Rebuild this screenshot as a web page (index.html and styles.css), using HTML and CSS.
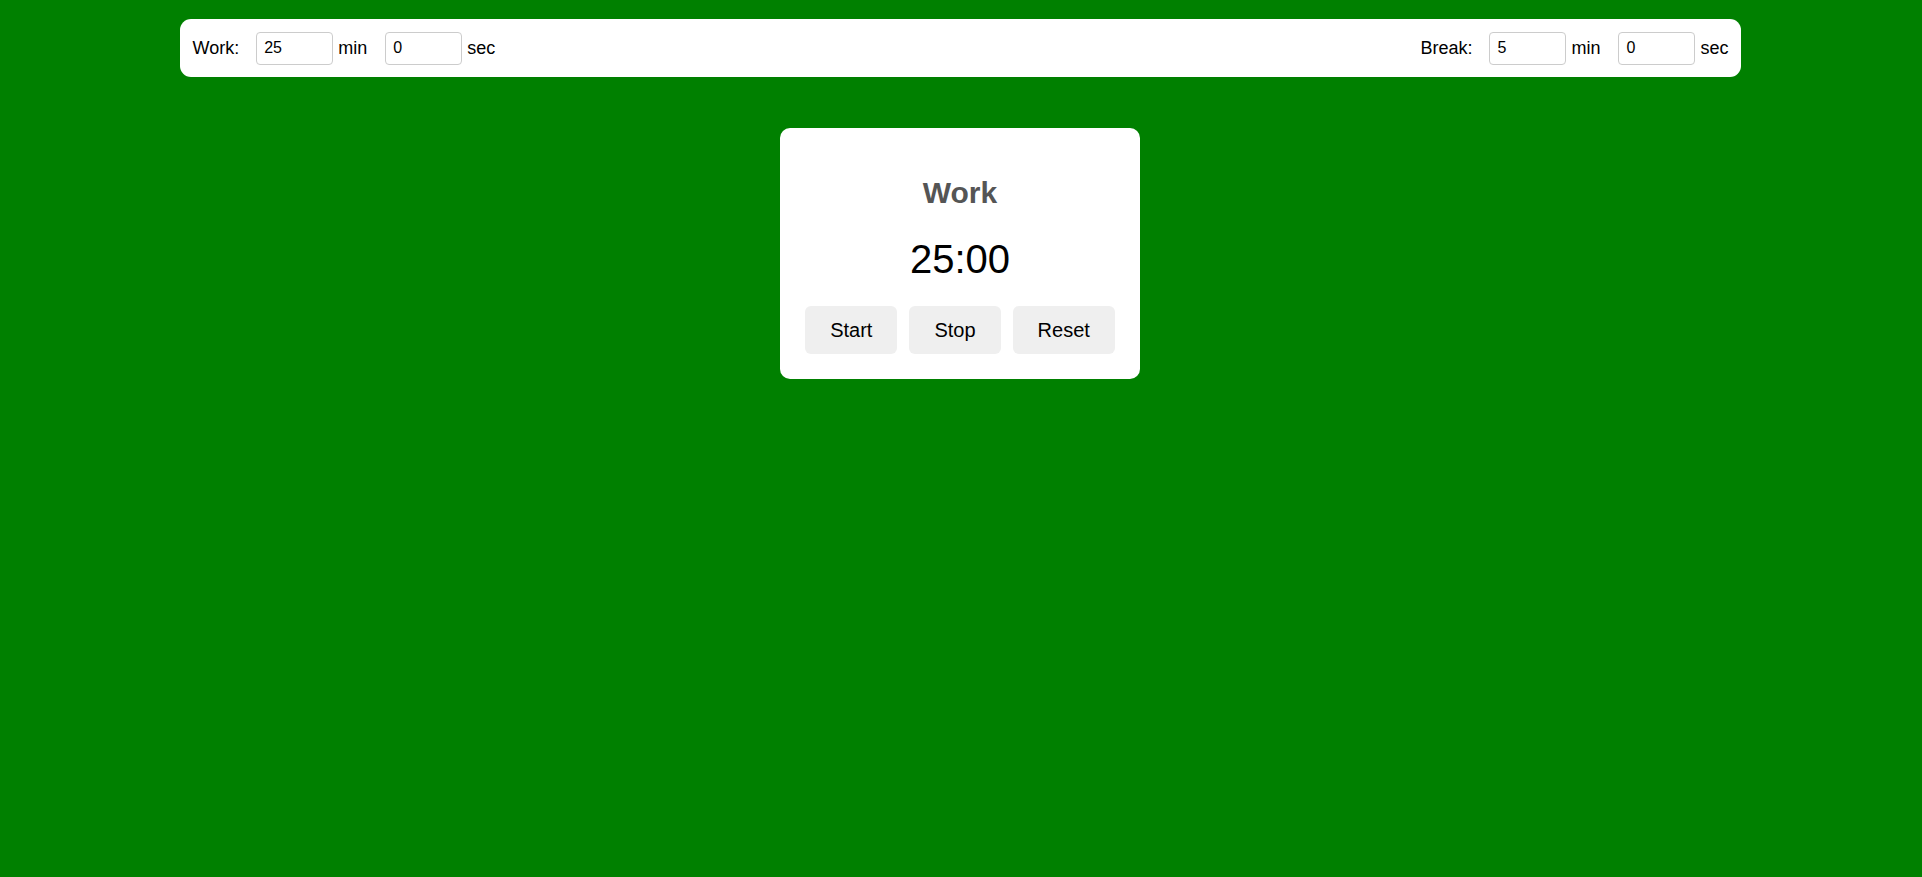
FILE: index.html
```html
<!DOCTYPE html>
<html lang="en">
<head>
<meta charset="utf-8">
<title>Pomodoro Timer</title>
<link rel="stylesheet" href="styles.css">
</head>
<body>
<div class="page">
  <div class="settings">
    <div class="group">
      <label class="label">Work:</label>
      <input class="field" type="text" value="25">
      <span class="unit">min</span>
      <input class="field" type="text" value="0">
      <span class="unit last">sec</span>
    </div>
    <div class="group">
      <label class="label">Break:</label>
      <input class="field" type="text" value="5">
      <span class="unit">min</span>
      <input class="field" type="text" value="0">
      <span class="unit last">sec</span>
    </div>
  </div>
  <div class="card">
    <h2 class="mode">Work</h2>
    <div class="time">25:00</div>
    <div class="buttons">
      <button class="btn">Start</button>
      <button class="btn">Stop</button>
      <button class="btn">Reset</button>
    </div>
  </div>
</div>
</body>
</html>
```
FILE: styles.css
```css
html, body {
  margin: 0;
  padding: 0;
}
body {
  background: #008000;
  font-family: "Liberation Sans", Arial, sans-serif;
  color: #000;
  min-height: 877px;
}
.page {
  width: 1920px;
  padding-top: 19px;
}
.settings {
  width: 1561px;
  height: 58px;
  margin: 0 auto;
  box-sizing: border-box;
  padding: 0 12px 0 13px;
  background: #fff;
  border-radius: 11px;
  display: flex;
  align-items: center;
  justify-content: space-between;
  font-size: 18px;
}
.group {
  display: flex;
  align-items: center;
}
.label {
  margin-right: 17px;
}
.field {
  width: 77px;
  height: 33px;
  box-sizing: border-box;
  padding: 0 7px;
  border: 1px solid #cccccc;
  border-radius: 4px;
  font-family: "Liberation Sans", Arial, sans-serif;
  font-size: 16px;
  color: #000;
  background: #fff;
  outline: none;
}
.unit {
  margin-left: 5px;
  margin-right: 18px;
}
.unit.last {
  margin-right: 0;
}
.card {
  width: fit-content;
  margin: 51px auto 0;
  padding: 25px;
  background: #fff;
  border-radius: 10px;
  text-align: center;
}
.mode {
  margin: 24px 0 0;
  font-size: 30px;
  line-height: 32px;
  font-weight: bold;
  color: #555;
}
.time {
  margin-top: 27px;
  font-size: 40px;
  line-height: 46px;
  color: #000;
}
.buttons {
  display: flex;
  gap: 12px;
  margin-top: 24px;
}
.btn {
  height: 48px;
  padding: 0 25px;
  border: none;
  border-radius: 6px;
  background: #efefef;
  font-family: "Liberation Sans", Arial, sans-serif;
  font-size: 20px;
  color: #000;
  cursor: pointer;
}
```
